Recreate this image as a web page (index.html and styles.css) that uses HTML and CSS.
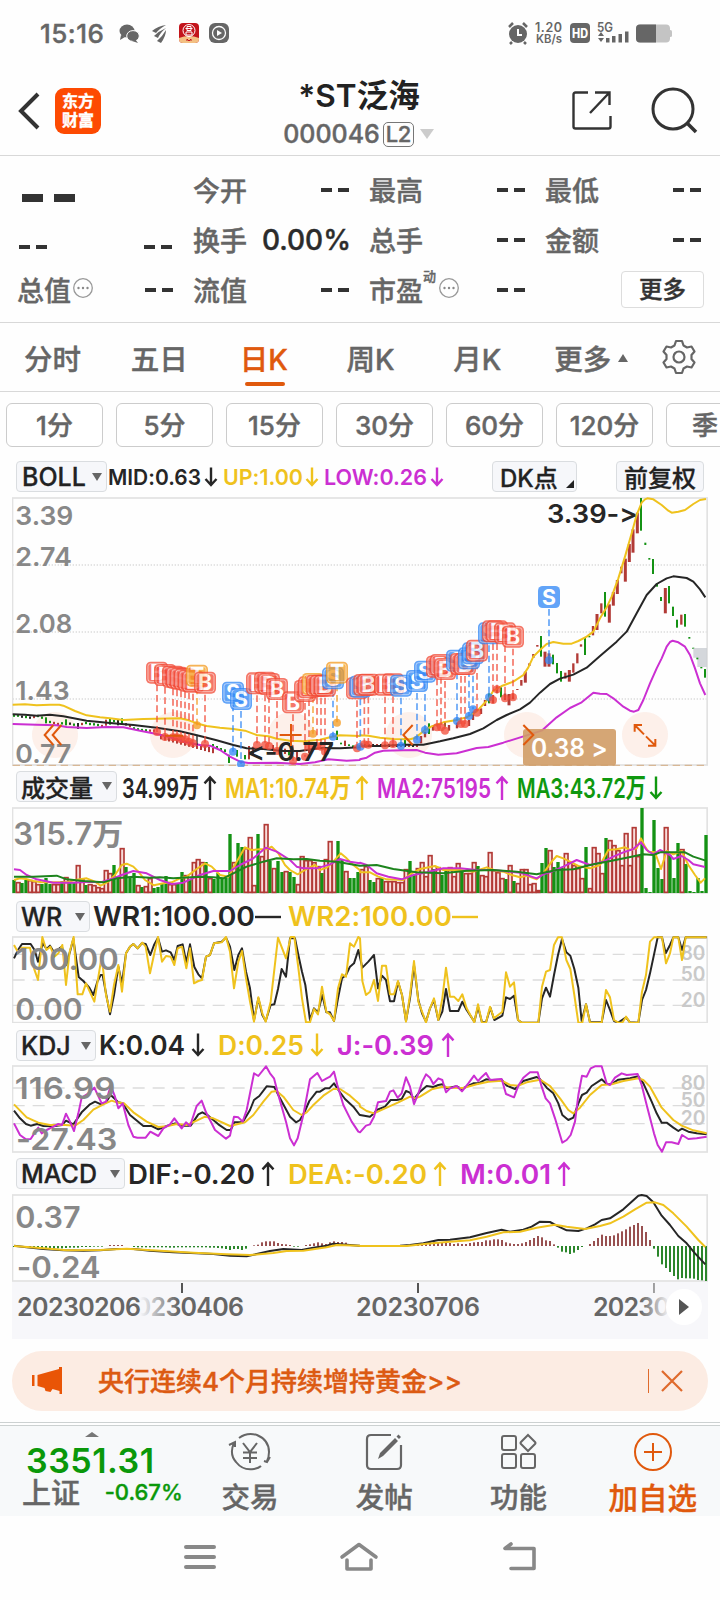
FILE: index.html
```html
<!DOCTYPE html>
<html lang="zh-CN">
<head>
  <meta charset="UTF-8">
  <title>*ST泛海 000046</title>
  <link rel="stylesheet" href="styles.css">
</head>
<body>
  <div class="status-bar">
    <span class="clock">15:16</span>
    <svg class="status-left" width="112" height="24" viewBox="118 0 112 24">
      <g fill="#666">
        <ellipse cx="127" cy="9" rx="7.500" ry="6.500"/><path d="M121 13l-1 5 5-3z"/>
        <ellipse cx="133" cy="14" rx="6.300" ry="5.400" stroke="#fff"/><path d="M135 17l3 4-6-2z"/>
        <path d="M152 9q6-5 14-6-7 4-10 8zM154 14q5-5 12-8-6 5-8 10zM157 19q5-4 9-11 0 6-5 13z"/>
        <rect x="209" y="1" width="20" height="20" rx="6"/>
      </g>
      <rect x="179" y="1" width="20" height="20" rx="4" fill="#c3141b"/>
      <path d="M179 16q10-4 20 0v1q0 4-4 4h-12q-4 0-4-4z" fill="#f3c083"/>
      <g fill="none" stroke="#fff" stroke-width="1"><circle cx="189" cy="8.500" r="6"/><path d="M185.500 6.500h7M187 4.500h4v4h-4zM186 10h6v3h-6z"/></g>
      <circle cx="219" cy="11" r="6.500" fill="none" stroke="#fff" stroke-width="1.300"/><path d="M217 8l5 3-5 3z" fill="#fff"/>
      <path d="M187 19v-2l2 2 2-2v2" stroke="#c3141b" fill="none"/>
    </svg>
    <svg class="status-right" width="166" height="24" viewBox="507 0 166 24">
      <circle cx="518" cy="12" r="9" fill="#666"/>
      <path d="M509 5l4-4M527 5l-4-4M512 20l-2 2M524 20l2 2" stroke="#666" stroke-width="2.500"/>
      <path d="M518 7v6h4" stroke="#fff" stroke-width="2" fill="none"/>
      <g fill="#666" font-weight="600"><text x="535" y="10" font-size="12.500" textLength="27">1.20</text><text x="536" y="20.500" font-size="12" textLength="26" lengthAdjust="spacingAndGlyphs">KB/s</text>
      <text x="597" y="10" font-size="12.500" textLength="16" lengthAdjust="spacingAndGlyphs">5G</text></g>
      <rect x="570" y="1" width="20" height="20" rx="4" fill="#666"/>
      <text x="572" y="15.500" font-size="12.500" font-weight="800" fill="#fff" textLength="16" lengthAdjust="spacingAndGlyphs">HD</text>
      <g fill="#666"><path d="M598 14l3-4 3 4zM598 16h6l-3 4z"/><rect x="606" y="16" width="3.500" height="4.500"/><rect x="612" y="14" width="3.500" height="6.500"/><rect x="618.500" y="12" width="3.500" height="8.500"/><rect x="625" y="9.500" width="3.500" height="11"/></g>
      <rect x="636" y="2.500" width="34" height="18" rx="4" fill="#c4c4c4"/><rect x="669" y="8" width="3" height="7" rx="1.500" fill="#c4c4c4"/>
      <path d="M656 2.500h-16q-4 0-4 4v10q0 4 4 4h16z" fill="#666"/>
    </svg>
  </div>

  <header class="header">
    <svg class="back" width="24" height="40" viewBox="0 0 24 40"><path d="M20 3L3 20l17 17" fill="none" stroke="#333" stroke-width="4"/></svg>
    <div class="app-logo">东方<br>财富</div>
    <div class="stock">
      <div class="stock-name">*ST泛海</div>
      <div class="stock-code"><span>000046</span><b>L2</b><i></i></div>
    </div>
    <svg class="share" width="42" height="42" viewBox="0 0 42 42"><path d="M16 2.500H3.500q-2 0-2 2v32q0 2 2 2h33q2 0 2-2V26M23 2.500h14.500V15M37 3L18 23" fill="none" stroke="#333" stroke-width="2.400"/></svg>
    <svg class="search" width="50" height="50" viewBox="0 0 50 50"><circle cx="22" cy="23" r="20" fill="none" stroke="#333" stroke-width="3"/><path d="M36 37l9 9" stroke="#333" stroke-width="3.600"/></svg>
  </header>

  <section class="quote">
    <div class="price">
      <div class="last"><i></i><i></i></div>
      <div class="change"><i class="nil"></i><i class="nil"></i></div>
    </div>
    <div class="cell">今开<i class="nil"></i></div>
    <div class="cell">最高<i class="nil"></i></div>
    <div class="cell">最低<i class="nil"></i></div>
    <div class="cell">换手<em>0.00%</em></div>
    <div class="cell">总手<i class="nil"></i></div>
    <div class="cell">金额<i class="nil"></i></div>
    <div class="cell">总值<svg width="22" height="22" viewBox="0 0 22 22"><use href="#dots"/></svg><i class="nil"></i></div>
    <div class="cell">流值<i class="nil"></i></div>
    <div class="cell">市盈<sup>动</sup><svg width="22" height="22" viewBox="0 0 22 22"><g id="dots"><circle cx="11" cy="11" r="9.300" fill="none" stroke="#999" stroke-width="1.300"/><g fill="#888"><circle cx="6.500" cy="11" r="1.200"/><circle cx="11" cy="11" r="1.200"/><circle cx="15.500" cy="11" r="1.200"/></g></g></svg><i class="nil"></i></div>
    <div class="cell end"><button class="more">更多</button></div>
  </section>

  <nav class="tabs">
    <span>分时</span>
    <span>五日</span>
    <span class="active">日K</span>
    <span>周K</span>
    <span>月K</span>
    <span>更多<i></i></span>
    <svg width="36" height="36" viewBox="0 0 36 36"><g fill="none" stroke="#666" stroke-width="2.200" stroke-linejoin="round"><path d="M15 2h6l1.500 4.500 3.500 2 4.500-1 3 5-3 3.500v4l3 3.500-3 5-4.500-1-3.500 2L21 34h-6l-1.500-4.500-3.500-2-4.500 1-3-5L5.500 20v-4l-3-3.500 3-5 4.500 1 3.500-2z"/><circle cx="18" cy="18" r="5.500"/></g></svg>
  </nav>

  <div class="periods">
    <button>1分</button>
    <button>5分</button>
    <button>15分</button>
    <button>30分</button>
    <button>60分</button>
    <button>120分</button>
    <button>季</button>
  </div>

  <main class="charts">
    <div class="bar bar-main">
      <button class="pick boll">BOLL<i></i></button>
      <svg class="legend" id="legend-boll"></svg>
      <button class="pick dk">DK点<i class="corner"></i></button>
      <button class="pick fq">前复权</button>
    </div>
    <svg class="chart" id="kline" height="270" viewBox="36 21 2088 810"></svg>

    <div class="bar bar-vol">
      <button class="pick vol">成交量<i></i></button>
      <svg class="legend" id="legend-vol"></svg>
    </div>
    <svg class="chart" id="volume" height="87" viewBox="36 126 2088 261"></svg>

    <div class="bar">
      <button class="pick wr">WR<i></i></button>
      <svg class="legend" id="legend-wr"></svg>
    </div>
    <svg class="chart" id="wr" height="87" viewBox="36 513 2088 261"></svg>

    <div class="bar">
      <button class="pick kdj">KDJ<i></i></button>
      <svg class="legend" id="legend-kdj"></svg>
    </div>
    <svg class="chart" id="kdj" height="88" viewBox="36 120 2088 264"></svg>

    <div class="bar bar-macd">
      <button class="pick macd">MACD<i></i></button>
      <svg class="legend" id="legend-macd"></svg>
    </div>
    <svg class="chart" id="macd" height="88" viewBox="36 507 2088 264"></svg>

    <svg class="axis" width="696" height="57" viewBox="12 1282 696 57">
      <defs>
        <linearGradient id="fade-l"><stop offset="0" stop-color="#f7f7fa"/><stop offset="1" stop-color="#f7f7fa" stop-opacity="0"/></linearGradient>
        <linearGradient id="fade-r"><stop offset="0" stop-color="#f7f7fa" stop-opacity="0"/><stop offset="1" stop-color="#f7f7fa"/></linearGradient>
      </defs>
      <g fill="#666" font-size="25" font-weight="600">
        <text x="120" y="1316" textLength="124">20230406</text>
        <text x="356" y="1316" textLength="124">20230706</text>
        <text x="593" y="1316" textLength="77">20230</text>
      </g>
      <path d="M182 1283v10M418 1283v10M654 1283v10" stroke="#555" stroke-width="2"/>
      <rect x="12" y="1296" width="128" height="39" fill="#f7f7fa"/>
      <rect x="140" y="1296" width="38" height="30" fill="url(#fade-l)"/>
      <text x="17" y="1316" font-size="25" font-weight="600" fill="#666" textLength="124">20230206</text>
      <rect x="640" y="1283" width="30" height="50" fill="url(#fade-r)"/>
      <circle cx="684" cy="1307" r="18" fill="#fff"/>
      <path d="M679 1299l10 8-10 8z" fill="#555"/>
    </svg>
  </main>

  <div class="notice">
    <svg width="32" height="30" viewBox="0 0 32 30"><path d="M31 1v27h-2.500v-3l-7-2-2 3-5-1-1-3-7-2v-11L28 3V1zM1 9h2.500v11H1z" fill="#e95506"/></svg>
    <p>央行连续4个月持续增持黄金&gt;&gt;</p>
    <i></i>
    <svg width="24" height="24" viewBox="0 0 24 24"><path d="M2 2l20 20M22 2L2 22" stroke="#df6a2c" stroke-width="2.200"/></svg>
  </div>

  <footer class="toolbar">
    <div class="index">
      <i></i>
      <strong>3351.31</strong>
      <div><span>上证</span><em>-0.67%</em></div>
    </div>
    <div class="action">
      <svg width="44" height="40" viewBox="0 0 44 40"><g fill="none" stroke="#666" stroke-width="2"><path d="M6 11Q1 22 8 30q7 9 18 7 5-1 7-3M11 6q8-6 18-3 12 5 12 17 0 5-2 9M1 13l6-3v5M42 25l-3 5-3-1M15 11l7 9 7-9M22 20v11M15 20.500h14M15 26h14"/></g></svg>
      交易
    </div>
    <div class="action">
      <svg width="40" height="40" viewBox="0 0 40 40"><path d="M27 3H7Q3 3 3 7v26q0 4 4 4h26q4 0 4-4V13" fill="none" stroke="#666" stroke-width="2.200"/><path d="M14 27l2-6L31 6l3 3-15 15zM32.500 4.500l2-2 2.500 2.500-2 2z" fill="#666"/></svg>
      发帖
    </div>
    <div class="action">
      <svg width="40" height="40" viewBox="0 0 40 40"><g fill="none" stroke="#666" stroke-width="2"><rect x="3" y="4" width="14" height="14" rx="2"/><rect x="3" y="22" width="14" height="14" rx="2"/><rect x="22" y="22" width="14" height="14" rx="2"/><path d="M29 3l7 7q1 1 0 2l-7 7-7-7q-1-1 0-2z"/></g></svg>
      功能
    </div>
    <div class="action add">
      <svg width="40" height="40" viewBox="0 0 40 40"><g fill="none" stroke="#e0590d" stroke-width="2"><circle cx="20" cy="20" r="18"/><path d="M20 11v18M11 20h18"/></g></svg>
      加自选
    </div>
  </footer>

  <div class="sys-nav">
    <svg width="32" height="30" viewBox="0 0 32 30"><path d="M2 5h28M2 15h28M2 25h28" stroke="#888" stroke-width="4" stroke-linecap="round"/></svg>
    <svg width="40" height="30" viewBox="0 0 40 30"><path d="M3 15L20 2.500 37 15M8 18v9h24v-9" fill="none" stroke="#888" stroke-width="3.600" stroke-linecap="round" stroke-linejoin="round"/></svg>
    <svg width="36" height="30" viewBox="0 0 36 30"><path d="M9 2L3 6.500h29v20H9" fill="none" stroke="#888" stroke-width="3.600" stroke-linecap="round" stroke-linejoin="round"/></svg>
  </div>

  <script src="charts.js"></script>
</body>
</html>
```
FILE: styles.css
```css
* {
  box-sizing: border-box;
}

body {
  margin: 0;
  width: 720px;
  height: 1600px;
  overflow: hidden;
  background: #fefefe;
  color: #666;
  font-family: Inter, "Noto Sans CJK SC", sans-serif;
  font-weight: 500;
  font-feature-settings: "calt" 0;
  -webkit-text-stroke: 0.4px;
}

i,
em {
  font-style: normal;
}

svg {
  display: block;
  flex: none;
  overflow: visible;
  -webkit-text-stroke: 0;
}

button {
  font: inherit;
  font-feature-settings: inherit;
  color: inherit;
  padding: 0;
}

.status-bar {
  display: flex;
  align-items: flex-start;
  height: 66px;
  padding: 22px 47px 0 40px;
}

.clock {
  width: 78px;
  font-size: 26px;
  line-height: 24px;
  font-weight: 500;
  letter-spacing: 0.5px;
}

.status-right {
  margin-left: auto;
}

.header {
  display: flex;
  height: 90px;
  padding: 0 19px 0 18px;
  border-bottom: 1px solid #d8d8d8;
}

.back {
  margin-top: 25px;
}

.app-logo {
  width: 46px;
  height: 46px;
  margin: 22px 0 0 13px;
  padding-top: 4px;
  border-radius: 9px;
  background: #fd4a02;
  color: #fff;
  font-size: 16px;
  line-height: 19px;
  font-weight: 700;
  text-align: center;
}

.stock {
  flex: 1;
  margin-left: 34px;
  padding-top: 9px;
  text-align: center;
}

.stock-name {
  font-size: 31.500px;
  line-height: 41px;
  font-weight: 600;
  color: #222;
  margin-right: -11px;
  -webkit-text-stroke: 0;
}

.stock-code {
  display: flex;
  justify-content: center;
  align-items: center;
  height: 36px;
  margin-right: -10px;
  font-size: 25px;
}

.stock-code b {
  width: 31px;
  height: 25px;
  margin-left: 3px;
  border: 1.500px solid #777;
  border-radius: 5px;
  font-size: 22px;
  line-height: 23px;
  font-weight: 500;
  letter-spacing: -0.5px;
}

.stock-code i {
  margin-left: 6px;
  border: 7px solid transparent;
  border-top: 10px solid #ccc;
  border-bottom: 0;
}

.share {
  margin: 24px 0 0;
}

.search {
  margin: 20px 0 0 37px;
}

.quote {
  display: grid;
  grid-template-columns: 176px 176px 176px 159px;
  grid-template-rows: 49px 51px 49px;
  height: 167px;
  padding: 9px 0 0 17px;
  border-bottom: 1px solid #d8d8d8;
}

.price {
  grid-row: span 2;
}

.last {
  display: flex;
  gap: 11px;
  padding: 29px 0 0 5px;
}

.last i {
  width: 21px;
  height: 8px;
  background: #333;
}

.change {
  display: flex;
  justify-content: space-between;
  padding: 43px 21px 0 2px;
}

.nil {
  display: flex;
  justify-content: space-between;
  width: 28px;
}

.nil::before,
.nil::after {
  content: "";
  width: 11px;
  height: 4px;
  background: #333;
}

.cell {
  display: flex;
  align-items: center;
  font-size: 27px;
}

.cell .nil,
.cell em {
  margin-left: auto;
  margin-right: 20px;
}

.cell em {
  color: #2b2b2b;
  margin-right: 18px;
  font-size: 28px;
}

.cell:nth-child(4) .nil,
.cell:nth-child(7) .nil {
  margin-right: 3px;
}

.cell sup {
  align-self: flex-start;
  margin-right: -12px;
  font-size: 13px;
  line-height: 22px;
}

.cell svg {
  margin: -4px 0 0 1px;
}

.cell sup + svg {
  margin-left: 14px;
}

.end {
  justify-content: flex-end;
}

.more {
  width: 83px;
  height: 37px;
  border: 1px solid #ddd;
  border-radius: 4px;
  background: #fff;
  color: #333;
  font-size: 23.500px;
  line-height: 34px;
}

.tabs {
  display: flex;
  align-items: center;
  height: 69px;
  padding: 0 23px 0 24px;
  border-bottom: 1px solid #d8d8d8;
  font-size: 28.500px;
  line-height: 60px;
}

.tabs span {
  width: 107px;
  height: 64px;
  padding-top: 5px;
}

.tabs span:nth-child(2) {
  width: 109px;
}

.tabs span:nth-child(5) {
  width: 101px;
}

.tabs .active {
  color: #e0590d;
}

.tabs .active::after {
  content: "";
  display: block;
  width: 40px;
  height: 4px;
  margin: -8px 0 0 5px;
  border-radius: 2px;
  background: #e0590d;
}

.tabs span i {
  display: inline-block;
  margin-left: 7px;
  border: 5px solid transparent;
  border-bottom: 8px solid #666;
  border-top: 0;
  vertical-align: 8px;
}

.tabs svg {
  margin-left: auto;
}

.periods {
  display: flex;
  gap: 13px;
  height: 64px;
  padding: 11px 0 0 6px;
  overflow: hidden;
}

.periods button {
  flex: none;
  width: 97px;
  height: 44px;
  padding-top: 1px;
  border: 1px solid #ccc;
  border-radius: 6px;
  background: #fff;
  font-size: 26px;
  line-height: 42px;
}

.periods button:last-child {
  padding-left: 25px;
  text-align: left;
}

.charts {
  padding: 0 12px;
}

.bar {
  display: flex;
  height: 42px;
  padding: 7px 4px 0;
}

.bar-main {
  height: 41px;
  padding-top: 5px;
}

.bar-vol {
  height: 40px;
  padding-top: 4px;
}

.bar-macd {
  height: 41px;
  padding-top: 5px;
}

.pick {
  display: flex;
  flex: none;
  align-items: center;
  justify-content: space-between;
  height: 31px;
  padding: 0 4px 0 4px;
  border: 1px solid #dadde0;
  border-radius: 4px;
  background: #f6f7fa;
  color: #222;
  font-size: 25px;
  -webkit-text-stroke: 0.3px;
}

.pick i {
  border: 5px solid transparent;
  border-top: 8px solid #666;
  border-bottom: 0;
}

.pick .corner {
  align-self: flex-end;
  margin-bottom: 3px;
  border: 0;
  border-bottom: 8px solid #222;
  border-left: 8px solid transparent;
}

.pick.boll {
  width: 91px;
  padding-left: 5px;
  font-size: 25px;
}

.pick.dk {
  width: 85px;
  padding: 0 2px 0 7px;
  margin-left: auto;
  font-size: 24px;
}

.pick.fq {
  width: 88px;
  margin-left: 39px;
  padding: 0 0 1px 7px;
  font-size: 24px;
}

.pick.vol {
  width: 101px;
  padding-bottom: 1px;
  font-size: 24px;
}

.pick.wr {
  width: 74px;
}

.pick.kdj {
  width: 80px;
}

.pick.macd {
  width: 109px;
  font-size: 25px;
}

.legend {
  height: 34px;
}

.chart {
  width: 696px;
  overflow: hidden;
}

.axis {
  margin-bottom: -4px;
  background: #f7f7fa;
}

.notice {
  display: flex;
  align-items: center;
  height: 60px;
  margin: 16px 12px 11px;
  padding: 0 24px 0 19px;
  border-radius: 30px;
  background: #fcece3;
  color: #dc5a12;
  font-size: 26px;
}

.notice p {
  flex: 1;
  margin: 0 0 3px 35px;
}

.notice i {
  width: 1px;
  height: 24px;
  margin-right: 11px;
  background: #df6a2c;
}

.toolbar {
  display: flex;
  height: 94px;
  border-top: 1px solid #ccd1d1;
  padding-top: 2px;
  background: linear-gradient(#fefefe 2px, #ccd1d1 2px, #ccd1d1 3px, #f7f9fa 3px);
}

.index {
  width: 183px;
  padding-left: 22px;
}

.index > i {
  display: block;
  width: 14px;
  margin: 7px 0 0 63px;
  border: 7px solid transparent;
  border-bottom: 5px solid #777;
  border-top: 0;
}

.index strong {
  display: block;
  margin: 5px 0 0 4px;
  color: #0a980a;
  font-size: 34px;
  line-height: 37px;
  font-weight: 600;
  letter-spacing: 0.5px;
  -webkit-text-stroke: 0;
}

.index div {
  display: flex;
  justify-content: space-between;
  margin-top: -2px;
  font-size: 29px;
  line-height: 34px;
}

.index em {
  color: #0a980a;
  font-size: 22px;
  line-height: 30px;
}

.action {
  display: flex;
  flex-direction: column;
  align-items: center;
  width: 134.500px;
  padding-top: 7px;
  font-size: 28.500px;
  line-height: 52px;
}

.add {
  color: #e0590d;
  font-size: 29.500px;
}

.sys-nav {
  display: flex;
  justify-content: space-between;
  height: 84px;
  padding: 26px 182px 0 184px;
}
```
FILE: charts.js
```js
const RED = '#b23a36', GREEN = '#149214', YELLOW = '#efc21d', PURPLE = '#cb2fd2', BLACK = '#262626';
const NS = 'http://www.w3.org/2000/svg';

function el(parent, name, attrs, text) {
  const node = document.createElementNS(NS, name);
  for (const k in attrs) node.setAttribute(k, attrs[k]);
  if (text) node.textContent = text;
  parent.appendChild(node);
  return node;
}

// points come in two pages, the second one starts at x = 1080
function line(svg, color, left, right) {
  const move = (s, dx) => s.trim().split(/\s+/).map(p => {
    const [x, y] = p.split(',').map(Number);
    return (x + dx) + ',' + y;
  });
  el(svg, 'polyline', {
    points: move(left, 0).concat(move(right, 1080)).join(' '),
    fill: 'none', stroke: color, 'stroke-width': 6, 'stroke-linejoin': 'round'
  });
}

function label(svg, x, y, text, size, width, color) {
  el(svg, 'text', {
    x, y, 'font-size': size, 'font-weight': 600, fill: color || '#888',
    textLength: width, lengthAdjust: 'spacingAndGlyphs'
  }, text);
}

function frame(svg, top, height) {
  el(svg, 'rect', { x: 37.5, y: top, width: 2084, height, fill: 'none', stroke: '#e2e2e2', 'stroke-width': 5 });
}

function grid(svg, ys, dash) {
  ys.forEach(y => el(svg, 'line', { x1: 38, x2: 2120, y1: y, y2: y, stroke: '#dcdcdc', 'stroke-width': 4, 'stroke-dasharray': dash }));
}

function legend(id, x0, width, size, base, items) {
  const svg = document.getElementById(id);
  svg.setAttribute('width', width);
  svg.setAttribute('viewBox', `${x0} 0 ${width} 34`);
  items.forEach(([text, x, w, color, mark, ax]) => {
    label(svg, x, base, text, size, w, color);
    const h = size * 0.8, t = base - h + 1;
    let d = `M${ax} ${base - 9}h26`;
    if (mark === 'up') d = `M${ax} ${base + 2}V${t}M${ax - 5.5} ${t + 6}l5.5 -6l5.5 6`;
    if (mark === 'down') d = `M${ax} ${t - 1}V${base}M${ax - 5.5} ${base - 6}l5.5 6l5.5 -6`;
    el(svg, 'path', { d, fill: 'none', stroke: color, 'stroke-width': 2.4 });
  });
}

legend('legend-boll', 107, 345, 22, 24, [
  ['MID:0.63', 108, 93, BLACK, 'down', 211],
  ['UP:1.00', 223, 80, YELLOW, 'down', 312],
  ['LOW:0.26', 324, 103, PURPLE, 'down', 437]
]);
legend('legend-vol', 117, 560, 27, 27, [
  ['34.99万', 122, 77, BLACK, 'up', 210],
  ['MA1:10.74万', 225, 126, YELLOW, 'up', 362],
  ['MA2:75195', 377, 114, PURPLE, 'up', 502],
  ['MA3:43.72万', 517, 129, '#0f980f', 'down', 656]
]);
legend('legend-wr', 90, 420, 27, 25, [
  ['WR1:100.00', 93, 162, BLACK, 'dash', 255],
  ['WR2:100.00', 288, 164, YELLOW, 'dash', 452]
]);
legend('legend-kdj', 96, 380, 27, 25, [
  ['K:0.04', 99, 86, BLACK, 'down', 198],
  ['D:0.25', 218, 86, YELLOW, 'down', 317],
  ['J:-0.39', 337, 97, PURPLE, 'up', 448]
]);
legend('legend-macd', 125, 460, 27, 26, [
  ['DIF:-0.20', 128, 127, BLACK, 'up', 268],
  ['DEA:-0.20', 288, 139, YELLOW, 'up', 440],
  ['M:0.01', 460, 91, PURPLE, 'up', 564]
]);

// ---------- K line ----------
const k = document.getElementById('kline');
grid(k, [225, 426, 627], '4 5');
frame(k, 24, 801);
el(k, 'line', { x1: 38, x2: 2120, y1: 826, y2: 826, stroke: '#d8b896', 'stroke-width': 4, 'stroke-dasharray': '22 14' });
[165, 519, 873, 1227, 1581, 1935].forEach(x => el(k, 'circle', { cx: x, cy: 735, r: 69, fill: '#fbe3d8', 'fill-opacity': 0.55 }));
[[104, '3.39', 174], [228, '2.74', 170], [428, '2.08', 171], [630, '1.43', 163], [819, '0.77', 168]]
  .forEach(([y, t, w]) => label(k, 46, y, t, 79, w));

function candle(x, y1, y2, color, w) {
  el(k, 'rect', { x: x - (w || 6) / 2, y: y1, width: w || 6, height: y2 - y1, fill: color });
}
// flat stretch on the left follows the middle of the band
const flat = [677, 677, 680, 681, 683, 681, 678, 683, 691, 696, 699, 702, 700, 697, 701, 704, 708, 702, 699, 702, 703, 705, 708, 698, 695, 693, 697, 694, 703, 708, 715, 718, 720, 721, 722, 722];
flat.forEach((y, i) => {
  const c = [GREEN, GREEN, BLACK, GREEN, BLACK, RED, GREEN, GREEN, GREEN, GREEN, RED, RED][i % 12];
  const h = [8, 13, 16, 23, 24, 26, 27].includes(i) ? 18 : 7;
  candle(42 + i * 12, y - h / 2, y + h / 2, c);
});
for (let x = 483, y = 732; x < 640; x += 12, y += 3.2) candle(x, y, y + 16, RED);
[[639, 762, 768], [651, 768, 776], [663, 774, 780], [675, 778, 786], [687, 794, 819], [711, 780, 800], [735, 795, 808]]
  .forEach(c => candle(...c, GREEN));
[[747, 768, 808], [759, 770, 795], [819, 765, 783], [855, 776, 792], [891, 785, 812], [927, 760, 790], [975, 770, 800], [1035, 752, 768]]
  .forEach(c => candle(...c, RED));
[[867, 785, 796], [1011, 722, 750], [1023, 758, 763], [1047, 763, 768], [1059, 766, 772], [1215, 745, 768], [1287, 700, 732], [1335, 698, 710]]
  .forEach(c => candle(...c, GREEN));
for (let x = 1083; x < 1260; x += 12) candle(x, 762, 771, x % 24 === 3 ? RED : BLACK);
[[1263, 738, 760], [1275, 725, 742], [1299, 706, 722], [1347, 705, 722], [1371, 698, 715], [1407, 690, 708], [1419, 665, 690], [1443, 655, 672], [1455, 630, 648], [1479, 615, 640],
[1491, 590, 610], [1515, 610, 630], [1527, 612, 646], [1539, 610, 628], [1552, 597, 600], [1564, 570, 587], [1576, 545, 578], [1588, 520, 528], [1600, 492, 504], [1612, 465, 470],
[1635, 485, 530], [1647, 490, 530], [1696, 548, 566], [1708, 540, 575], [1720, 520, 548], [1732, 490, 520], [1743, 463, 470], [1779, 408, 436], [1791, 372, 420], [1804, 340, 370],
[1828, 343, 398], [1840, 306, 347], [1852, 270, 312], [1864, 230, 250], [1876, 206, 275], [1888, 162, 216], [1899, 118, 188], [1912, 68, 130], [1996, 294, 370], [2044, 374, 404]]
  .forEach(([x, a, b]) => candle(x, a, b, RED, b - a > 30 ? 9 : 7));
[[1467, 610, 640], [1503, 592, 622], [1623, 438, 500], [1659, 494, 523], [1671, 519, 550], [1683, 543, 575], [1755, 443, 495], [1768, 438, 442], [1815, 306, 380], [1923, 24, 122],
[1936, 158, 165], [1948, 204, 209], [1959, 207, 252], [1971, 280, 290], [1983, 321, 333], [2007, 288, 340], [2019, 350, 378], [2031, 389, 413], [2055, 372, 410], [2068, 441, 446],
[2080, 473, 477], [2104, 531, 535], [2115, 537, 563]]
  .forEach(c => candle(...c, GREEN));
el(k, 'path', { d: 'M2080 474H2121V531H2092V503H2080z', fill: '#c9cdd2', 'fill-opacity': 0.8 });
candle(2092, 503, 508, GREEN);

line(k, PURPLE, `38,702 110,704 170,706 200,711 260,714 320,711 370,712 420,722 470,732 510,742 550,755 600,765 630,767 660,780 690,800 720,815 745,819 830,818 900,822 945,817 985,808 1040,812 1079,810`,
  `0,808 20,803 45,788 70,782 130,781 170,780 195,788 235,794 290,790 350,774 385,771 430,758 500,736 545,722 590,682 630,654 665,637 700,608 720,611 740,612 760,625 790,650 810,662 822,665 835,660 850,630 870,580 890,535 905,505 920,470 930,456 938,452 955,457 975,470 990,495 1005,535 1020,580 1036,615`);
line(k, BLACK, `38,673 75,674 110,677 150,674 190,679 260,692 330,699 400,705 470,713 540,724 600,738 650,751 700,765 740,775 790,777 850,783 900,783 960,774 1020,775 1079,772`,
  `0,768 60,768 130,764 190,764 240,754 280,745 330,732 370,715 410,690 440,675 480,658 510,638 540,608 570,582 600,566 640,554 680,533 720,498 770,455 800,425 830,370 860,315 890,282 920,265 940,259 980,264 1000,275 1020,298 1036,322`);
line(k, YELLOW, `38,644 75,643 110,646 150,644 178,644 190,647 225,663 260,676 300,682 330,685 370,690 430,687 540,685 560,689 600,703 620,708 660,713 700,717 735,722 770,735 805,739 830,746 870,752 910,754 960,749 990,742 1020,736 1079,738`,
  `0,736 25,737 60,743 100,747 150,748 165,744 195,720 215,709 250,697 290,690 320,682 350,664 385,627 400,602 425,588 460,575 490,555 505,532 520,500 540,480 560,462 580,456 610,461 635,461 655,453 680,440 700,425 720,385 740,352 755,320 775,265 795,200 815,130 830,75 845,38 855,28 862,25 880,28 905,45 925,62 935,68 955,65 975,60 1000,42 1020,30 1038,27`);
el(k, 'line', { x1: 591, x2: 591, y1: 734, y2: 765, stroke: BLACK, 'stroke-width': 4 });

// signals: letter, x, badge y, dot y
const signals = [
  ['B', 471, 548, 726], ['B', 495, 555, 741], ['B', 519, 560, 742], ['B', 531, 563, 742], ['B', 543, 566, 748], ['B', 555, 568, 748], ['B', 567, 572, 755], ['B', 579, 575, 760],
  ['T', 591, 557, 706], ['B', 615, 578, 762], ['S', 699, 608, 785], ['S', 723, 627, 822], ['B', 771, 580, 765], ['B', 795, 578, 765], ['B', 807, 582, 768], ['B', 831, 597, 783],
  ['B', 879, 637, 812], ['B', 915, 603, 800], ['B', 927, 592, 770], ['T', 939, 582, 731], ['B', 951, 587, 768], ['B', 963, 587, 770], ['B', 975, 587, 785], ['S', 999, 565, 740],
  ['T', 1011, 548, 698], ['B', 1071, 595, 775], ['S', 1081, 590, 770], ['B', 1093, 585, 763], ['B', 1105, 584, 764], ['B', 1155, 584, 766], ['B', 1179, 583, 762], ['S', 1203, 587, 768],
  ['S', 1251, 573, 749], ['S', 1275, 545, 720], ['B', 1311, 530, 712], ['B', 1323, 525, 712], ['B', 1335, 537, 722], ['S', 1371, 512, 693], ['B', 1383, 522, 702], ['B', 1395, 522, 702],
  ['S', 1407, 505, 678], ['S', 1419, 490, 658], ['B', 1431, 482, 668], ['S', 1467, 430, 622], ['B', 1479, 424, 630], ['B', 1491, 424, 598], ['B', 1515, 430, 625], ['B', 1539, 440, 622], ['S', 1647, 321, 511]
];
const signalColor = { B: '#f24a36', S: '#2f86f6', T: '#f49a1e' };
signals.forEach(([c, x, y, dot]) => {
  el(k, 'line', { x1: x, x2: x, y1: y + 36, y2: dot, stroke: signalColor[c], 'stroke-width': 5, 'stroke-dasharray': '20 11', opacity: 0.75 });
  el(k, 'circle', { cx: x, cy: dot, r: 12, fill: signalColor[c], opacity: 0.75 });
});
signals.forEach(([c, x, y]) => {
  const g = el(k, 'g', { opacity: 0.75 });
  el(g, 'rect', { x: x - 33, y: y - 33, width: 66, height: 66, rx: 14, fill: signalColor[c] });
  if (x < 1600) el(g, 'rect', { x: x - 27, y: y - 27, width: 54, height: 54, rx: 8, fill: 'none', stroke: '#fff', 'stroke-width': 3, opacity: 0.5 });
  el(g, 'text', { x, y: y + 23, 'font-size': 64, 'font-weight': 700, fill: '#fff', 'text-anchor': 'middle' }, c);
});

label(k, 740, 812, '<-0.77', 79, 262, BLACK);
label(k, 1641, 98, '3.39->', 79, 272, BLACK);

el(k, 'rect', { x: 1569, y: 717, width: 279, height: 110, rx: 9, fill: '#d09c66', 'fill-opacity': 0.9 });
label(k, 1593, 800, '0.38 >', 76, 230, '#fff');
el(k, 'path', {
  d: 'M160 705l-26 30 26 30M184 705l-26 30 26 30M495 737h54M873 702v66M839 735h66M1238 705l-28 30 28 30M1570 705l30 30-30 30M1904 725v-20h22M1904 705l28 28M1966 747v20h-22M1966 767l-28-28',
  fill: 'none', stroke: '#e0590d', 'stroke-width': 6
});

// ---------- volume ----------
const v = document.getElementById('volume');
frame(v, 129, 255);
label(v, 40, 240, '315.7万', 92, 330);
const volume = ('g13 r11 g10 g13 r13 r12 r9 g9 g15 g9 r9 r9 g12 r16 g10 g10 r28 r14 g8 r9 r8 r6 r5 r23 r20 g28 g14 r45 g26 g16 g20 r8 g6 r7 r15 g5 g6 g9 g17 r9 r9 g10 g21 r18 g14 ' +
  'r31 r34 r31 g31 r15 g14 g20 g15 g15 g59 r31 g50 g46 r45 r56 r8 g59 r37 r69 g32 r25 g32 g21 r22 g21 g16 r9 r37 r33 r33 r31 r27 g20 r34 r52 r32 g52 g33 r22 g15 g15 g21 ' +
  'r24 r27 g13 g11 r15 g15 r12 r12 r12 r11 r11 r24 g32 g18 r25 r31 r17 r38 g24 r26 g18 g22 r26 r17 r30 g23 r20 r20 r31 g27 r18 r17 r41 r23 r21 r15 g14 r28 g12 r10 r24 r24 r9 r10 r3 ' +
  'g30 g45 r43 g26 g31 g25 r40 r31 r28 r25 r15 g46 r5 r46 r40 r20 g55 r53 r48 r43 r28 r60 r28 r66 r37 g85 g5 g1 g73 g25 g14 r66 g38 g15 g50 r44 g29 g2 g1 g15 g2 g58').split(' ');
volume.forEach((s, i) => {
  const x = 42 + i * 12, h = s.slice(1) * 3;
  if (s[0] === 'g') el(v, 'rect', { x: x - 5, y: 384 - h, width: 10, height: h, fill: GREEN });
  else el(v, 'rect', { x: x - 5, y: 386 - h, width: 11, height: Math.max(h - 4, 1), fill: '#f7dcda', stroke: RED, 'stroke-width': 5 });
});
line(v, YELLOW, `42,345 60,340 78,342 100,348 125,352 200,352 225,345 260,340 285,350 302,362 325,350 345,330 365,300 380,296 400,305 415,320 435,345 462,361 490,355 515,352 540,340 560,335 590,312 615,295 635,305 660,330 685,335 710,290 735,247 755,255 780,253 800,253 815,245 835,265 855,300 870,315 893,328 920,312 945,300 960,315 980,308 1000,290 1022,265 1040,280 1060,300 1079,315`,
  `0,322 30,322 55,335 80,343 130,345 155,325 180,312 225,303 250,315 300,315 340,320 380,307 410,318 430,320 455,330 480,337 500,332 530,343 550,325 575,290 590,273 610,280 630,290 655,303 690,310 720,300 745,255 770,253 795,247 810,255 830,250 843,220 855,245 865,260 885,262 903,312 920,258 940,268 965,258 985,300 1005,330 1022,353 1035,340`);
line(v, PURPLE, `42,313 60,315 80,330 110,343 160,353 220,353 270,350 300,352 340,340 365,330 400,318 440,325 480,345 515,357 550,353 600,330 640,318 690,318 720,300 760,280 797,248 830,260 870,285 890,305 910,310 950,310 990,298 1020,282 1050,290 1079,295`,
  `0,293 20,300 50,325 85,335 125,343 160,330 200,322 250,310 300,310 350,315 400,315 450,320 480,323 530,340 550,328 580,318 610,305 650,285 690,300 730,290 760,275 790,262 820,252 843,232 860,255 880,268 900,255 930,270 940,282 965,273 985,285 1000,298 1035,306`);
line(v, '#1d841d', `42,335 100,335 170,332 200,343 250,348 310,352 350,340 400,335 450,338 480,337 520,340 600,335 640,337 670,340 700,325 740,305 790,290 830,280 880,283 920,282 960,287 1010,290 1079,302`,
  `0,302 50,300 100,312 170,322 250,325 320,317 400,315 470,320 530,328 590,315 640,313 700,298 740,290 800,278 850,268 880,270 900,262 950,262 975,262 1000,275 1035,286`);

// ---------- WR ----------
const w = document.getElementById('wr');
frame(w, 516, 257);
grid(w, [568, 645, 721], '36 24');
[['80', 585], ['50', 648], ['20', 726]].forEach(([t, y]) => label(w, 2042, y, t, 60, 74, '#c9c9c9'));
line(w, BLACK, `42,580 54,555 66,537 92,537 104,556 114,590 128,535 140,552 150,542 162,562 186,545 198,600 210,560 220,522 236,636 250,648 268,668 280,690 292,650 302,630 308,630 318,685 330,748 342,690 355,605 366,655 378,565 390,545 400,537 413,550 425,535 437,537 451,570 462,540 474,518 486,560 498,556 512,562 523,585 533,543 548,538 559,592 570,538 583,606 595,628 606,640 618,575 630,570 642,535 665,530 678,518 690,545 703,615 715,570 726,550 738,620 750,670 762,765 775,700 787,750 797,768 812,720 823,718 834,672 845,612 858,635 870,520 885,520 895,570 906,620 916,660 930,765 942,730 954,742 967,690 979,742 990,742 1002,768 1014,700 1026,640 1038,630 1050,605 1062,595 1075,555`,
  `7,608 25,590 42,570 54,670 66,632 78,645 90,709 102,709 114,650 126,690 138,768 150,700 162,600 175,705 186,745 198,770 210,730 222,705 235,765 247,740 258,672 270,738 295,738 307,710 320,735 343,770 354,725 366,772 378,772 391,728 403,765 427,752 438,697 450,702 462,692 474,765 485,773 535,773 546,700 558,668 570,695 582,630 594,570 606,522 619,562 631,572 643,612 655,668 665,768 678,718 690,772 725,772 738,705 750,735 762,768 775,773 798,757 810,772 835,773 846,705 858,675 870,625 893,517 906,517 917,565 930,540 940,517 955,517 966,555 977,517 1040,517`);
line(w, YELLOW, `42,540 54,562 66,548 90,548 102,610 114,645 127,516 139,555 151,545 163,575 175,565 187,540 198,660 209,560 221,516 233,688 247,688 258,655 283,710 305,575 318,690 330,740 342,660 355,600 366,680 378,565 390,545 400,537 413,550 427,533 437,545 450,625 463,565 474,516 486,590 498,573 512,575 523,600 533,550 546,545 559,610 570,550 582,655 595,648 606,645 618,575 630,570 642,535 665,532 678,516 690,560 702,670 715,590 726,558 738,640 750,710 762,770 775,697 787,745 797,770 812,710 834,518 858,580 872,516 883,516 894,600 906,700 918,772 930,772 942,732 954,748 966,665 979,740 990,748 1002,768 1014,670 1026,628 1038,635 1050,535 1062,545 1075,516`,
  `0,520 7,648 18,690 30,680 42,645 54,708 66,602 78,602 90,688 102,688 114,648 126,690 138,770 150,690 162,588 175,710 198,772 210,730 222,700 235,765 247,700 258,608 270,695 282,695 295,708 307,688 320,730 343,772 354,718 366,773 378,773 390,725 402,760 427,740 438,622 450,665 462,652 474,765 485,773 535,773 546,665 558,620 570,615 582,540 594,517 606,517 619,585 631,612 643,690 655,773 667,773 678,718 690,773 725,773 738,675 750,697 762,765 775,773 787,773 798,755 810,773 835,773 846,680 858,630 870,530 882,517 906,517 918,595 930,565 940,517 955,517 966,585 977,517 1040,517`);
label(w, 46, 614, '100.00', 88, 310);
label(w, 46, 766, '0.00', 88, 202);

// ---------- KDJ ----------
const j = document.getElementById('kdj');
frame(j, 123, 258);
grid(j, [189, 242, 296], '36 24');
[['80', 194], ['50', 245], ['20', 299]].forEach(([t, y]) => label(j, 2042, y, t, 60, 74, '#c9c9c9'));
line(j, BLACK, `42,257 60,280 78,297 92,302 112,297 130,303 160,304 186,300 198,287 220,298 245,262 270,238 285,230 303,238 318,232 332,210 345,222 355,232 368,235 390,270 430,303 455,303 475,313 500,303 525,295 545,302 572,302 595,268 607,262 625,272 655,298 680,315 692,315 703,292 728,292 750,255 762,225 778,213 800,184 823,186 840,220 870,275 888,292 900,285 915,258 928,228 950,200 960,200 975,190 988,190 1002,175 1015,195 1035,222 1060,245 1079,270`,
  `0,270 30,275 42,265 50,255 75,245 92,225 110,225 125,222 138,198 150,203 162,222 180,200 200,183 220,186 235,180 247,178 260,190 290,184 305,192 340,175 355,175 378,163 395,165 425,164 440,182 465,192 490,168 530,156 540,162 560,188 580,205 595,235 607,270 625,285 640,278 655,235 666,210 680,203 695,183 725,163 740,177 755,177 775,164 810,160 835,154 850,175 875,230 890,265 905,293 920,293 940,308 955,318 966,311 985,320 1010,325 1040,328`);
line(j, YELLOW, `42,238 80,277 115,293 150,300 186,299 225,302 250,285 280,254 310,238 335,227 350,232 372,235 400,262 440,290 475,306 500,304 530,297 560,300 590,287 615,275 640,280 690,303 735,292 760,270 790,230 815,200 830,198 850,215 880,255 905,270 920,262 940,240 970,212 1000,192 1020,192 1050,212 1079,238`,
  `0,245 20,258 42,265 80,248 115,232 150,215 165,220 180,215 215,193 247,185 275,188 310,189 350,178 385,170 425,167 450,180 475,182 500,172 540,164 570,183 600,220 625,255 640,265 660,248 690,210 725,180 755,178 790,168 835,160 850,165 870,185 905,248 940,285 965,302 1000,316 1040,325`);
line(j, PURPLE, `42,295 60,330 78,343 92,342 105,322 115,308 125,325 140,315 160,305 175,297 186,300 198,266 210,290 222,318 235,265 245,218 262,207 283,188 305,235 318,230 332,182 345,215 355,250 368,235 385,300 400,335 412,338 437,338 451,320 475,333 490,310 510,298 523,280 545,310 558,292 570,303 590,243 605,227 618,262 630,285 645,315 678,341 690,332 702,275 715,277 728,290 740,255 762,145 775,153 798,124 810,145 822,160 835,210 858,290 870,340 882,361 893,340 910,270 930,163 952,144 966,168 980,160 990,155 1002,140 1012,180 1030,240 1055,290 1075,320`,
  `0,322 18,302 30,298 42,275 54,232 78,228 90,200 100,196 113,218 125,205 138,157 150,185 162,237 175,205 187,170 198,148 210,158 220,177 235,160 247,165 258,202 270,190 290,183 306,199 325,175 342,152 354,168 366,155 378,144 390,165 425,162 438,207 462,217 475,182 490,158 510,142 533,142 545,185 557,220 570,235 585,280 607,353 620,345 632,330 645,290 655,210 666,152 680,155 692,130 705,124 725,124 740,175 750,180 765,158 785,145 800,150 833,147 845,180 860,240 882,325 893,360 906,380 918,352 935,352 955,357 966,330 985,342 1010,340 1040,335`);
label(j, 44, 222, '116.99', 90, 302);
label(j, 48, 374, '-27.43', 90, 304);

// ---------- MACD ----------
const m = document.getElementById('macd');
frame(m, 510, 258);
label(m, 46, 609, '0.37', 90, 196);
label(m, 50, 759, '-0.24', 90, 252);
const hist = [-3, -3, -3, -4, -4, -5, -5, -6, -6, -7, -7, -7, -7, -6, -5, -5, -5, -3, -3, -3, -2, -2, -2, 0, 3, 3, 3, 3, 0, 0, -3, -4, -4, -4, -4, -4, -4, -4, -4, -5, -5, -4, -4, -4, -4, -4, -4, -4, -4, -5, -5, -6, -7, -9, -12, -9, -9, -12, -8, 0,
  2, 4, 11, 14, 14, 14, 9, 6, 5, 3, -2, -2, 0, 3, 5, 8, 11, 8, 6, 11, 14, 12, 12, 10, 6, 3, 0, -1, -1, -1, -1, -1, -1, -1, -1, 1, 2, 2, 2, 3, 3, 6, 8, 9, 12, 14, 12, 11, 9, 9, 6, 8, 6, 6, 9, 11, 12, 12, 17, 17,
  20, 20, 18, 11, 8, 6, 6, 8, 12, 18, 24, 30, 26, 17, 15, 5, -5, -17, -19, -24, -20, -12, -3, 0, 6, 15, 24, 34, 30, 30, 32, 38, 44, 50, 58, 63, 69, 60, 42, 18, -8, -32, -55, -66, -78, -90, -100, -96, -97, -97, -98, -102, -103, -105];
hist.forEach((h, i) => {
  el(m, 'rect', { x: 39 + i * 12, y: h > 0 ? 663 - h : 663, width: 6, height: Math.abs(h), fill: h > 0 ? '#985050' : '#2b862b' });
});
line(m, BLACK, `42,662 80,667 130,672 190,676 250,677 300,676 350,672 400,672 450,677 520,682 590,685 640,687 690,692 740,694 770,687 810,678 850,672 905,675 940,668 980,662 1000,656 1079,662`,
  `0,663 120,662 150,660 190,655 235,645 270,644 330,637 380,624 425,614 450,620 490,614 515,605 540,590 570,591 590,602 620,616 655,618 680,610 705,598 725,585 750,580 790,553 815,530 835,512 845,510 860,513 880,532 905,572 930,600 955,633 980,655 1005,685 1036,718`);
line(m, YELLOW, `42,663 130,670 200,676 300,675 380,671 480,677 580,683 680,688 750,690 820,684 860,678 910,677 980,667 1010,660 1079,662`,
  `0,663 140,663 200,656 260,651 330,646 380,635 430,622 480,620 530,608 585,599 620,605 675,612 720,603 750,595 790,575 825,553 860,533 885,532 910,540 940,565 980,605 1015,645 1036,666`);
```
